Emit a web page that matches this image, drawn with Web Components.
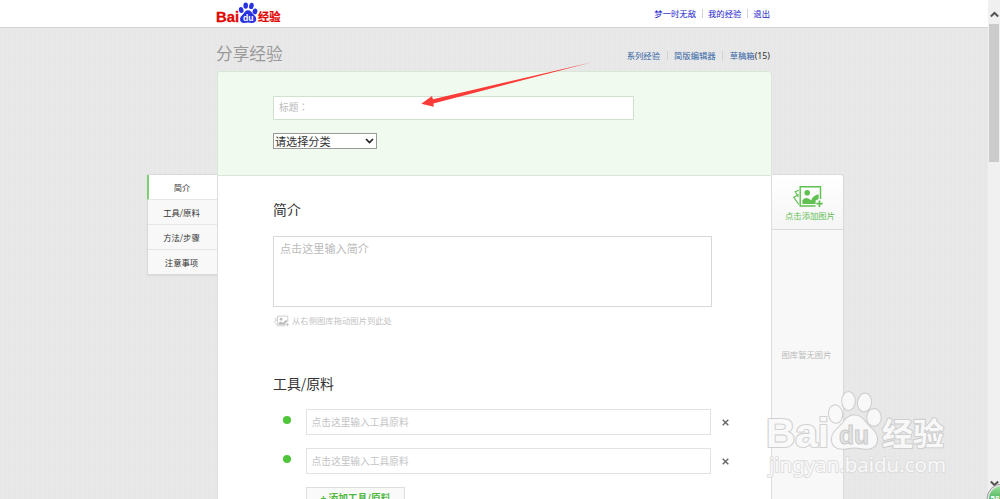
<!DOCTYPE html>
<html lang="zh-CN">
<head>
<meta charset="utf-8">
<title>分享经验</title>
<style>
  html, body {
    margin: 0;
    height: 100%;
    overflow: hidden;
  }
  body {
    font-family: "Noto Sans CJK SC", sans-serif;
    font-size: 8.33px;
    line-height: 12px;
    color: #333;
    background: #e8e8e8;
  }
</style>
</head>
<body>
<exp-app></exp-app>

<script>
const define = (name, html) => {
  const template = document.createElement('template');
  template.innerHTML = html;

  window.customElements.define(name, class extends HTMLElement {
    constructor() {
      super();
      this.attachShadow({ mode: 'open' }).appendChild(template.content.cloneNode(true));
    }
  });
};

define('exp-logo', `
  <style>
    :host { display: block; width: 66px; height: 24px; }
    svg { display: block; overflow: visible; }
    text { font-weight: bold; }
  </style>
  <svg width="66" height="24" viewBox="0 0 66 24">
    <g fill="#e10601">
      <text x="-1" y="20.800" font-family="Liberation Sans, Arial, sans-serif" font-size="14" textLength="23" lengthAdjust="spacingAndGlyphs" stroke="#e10601" stroke-width=".3">Bai</text>
      <text x="41" y="20.300" font-family="Noto Sans CJK SC, sans-serif" font-size="11.200" textLength="22.500" lengthAdjust="spacingAndGlyphs" stroke="#e10601" stroke-width=".2">经验</text>
    </g>
    <g fill="#2932e1">
      <ellipse cx="24.200" cy="9" rx="2.300" ry="3.100" transform="rotate(-12 24.200 9)"/>
      <ellipse cx="28.700" cy="4.600" rx="2.300" ry="3.200"/>
      <ellipse cx="34.400" cy="4.900" rx="2.300" ry="3.200" transform="rotate(12 34.400 4.900)"/>
      <ellipse cx="38" cy="10.400" rx="2.400" ry="3" transform="rotate(10 38 10.400)"/>
      <path d="M31 9.300c2.600 0 3.600 2.200 5 3.600 1.600 1.500 3.200 2.900 3.200 5.200 0 2.500-1.600 4-4.400 3.900-1.500-.1-2.600-.4-3.800-.4s-2.300.4-3.800.4c-2.800 0-4.200-1.400-4.200-3.900 0-2.300 1.700-3.600 3.200-5.200 1.400-1.500 2.200-3.600 4.800-3.600z"/>
    </g>
    <text x="26" y="20" fill="#fff" font-family="Liberation Sans, Arial, sans-serif" font-size="9" textLength="10.500" lengthAdjust="spacingAndGlyphs">du</text>
  </svg>
`);

define('exp-links', `
  <style>
    :host { display: flex; align-items: center; --gap: 5.5px; }
    ::slotted(*) { padding-left: var(--gap); margin-left: var(--gap); border-left: 1px solid #d2d2d2; line-height: 9px; white-space: nowrap; }
    ::slotted(:first-child) { border: 0; }
  </style>
  <slot></slot>
`);

define('exp-header', `
  <style>
    :host {
      display: flex;
      box-sizing: border-box;
      height: 28px;
      padding-left: 217px;
      background: #fff;
      border-bottom: 1px solid #d2d2d2;
    }
    .inner { display: flex; justify-content: space-between; width: 553px; }
    exp-links { color: #2020cc; height: 27px; }
    exp-logo { margin-top: 1px; }
  </style>
  <div class="inner">
    <exp-logo></exp-logo>
    <exp-links><span>梦一时无敌</span><span>我的经验</span><span>退出</span></exp-links>
  </div>
`);

define('exp-nav', `
  <style>
    :host {
      display: block;
      box-sizing: border-box;
      width: 70px;
      height: 101px;
      margin-top: 146px;
      background: #f8f8f8;
      border: 1px solid #d8d8d8;
      border-right: 0;
      box-shadow: 0 1px 1px rgba(0, 0, 0, .04);
    }
    div {
      box-sizing: border-box;
      height: 25px;
      padding-right: 2px;
      line-height: 24px;
      text-align: center;
      border-bottom: 1px solid #e6e6e6;
    }
    div:last-child { border: 0; }
    .on { margin-left: -1px; background: #fff; border-left: 2px solid #7bd070; }
  </style>
  <div class="on">简介</div>
  <div>工具/原料</div>
  <div>方法/步骤</div>
  <div>注意事项</div>
`);

define('exp-icon-photo', `
  <style>
    :host { display: block; width: 30px; height: 23px; color: #5fc052; }
    svg { display: block; width: 100%; height: 100%; }
  </style>
  <svg viewBox="0 0 30 23" fill="none" stroke="currentColor">
    <path d="M27.500 14V1.700H7.200V21H22.500" stroke-width="1.400"/>
    <path d="M5.800 5.200L2.300 6.800l3 5.200M5.800 9.500L.8 12.300l5 7.200" stroke-width="1.200"/>
    <circle cx="14.200" cy="7.800" r="2.800" fill="currentColor" stroke="none"/>
    <path d="M9.400 19v-3.400c.8-2 3.800-3.500 6-2.100l2.800 1.700c1.300-3 4-5.400 7.400-5.900v4.700l-3 1.500v3.500z" fill="currentColor" stroke="none"/>
    <path d="M26.500 15.500v6.500M23.300 18.700h6.400" stroke-width="1.700"/>
  </svg>
`);

define('exp-gallery', `
  <style>
    :host {
      display: flex;
      flex-direction: column;
      box-sizing: border-box;
      width: 72px;
      height: 340px;
      margin-top: 146px;
      background: #f8f8f8;
      border: 1px solid #dadada;
      border-left: 0;
      border-radius: 0 4px 0 0;
    }
    .add {
      display: flex;
      flex-direction: column;
      align-items: center;
      box-sizing: border-box;
      height: 55px;
      padding-top: 10px;
      color: #5fc052;
      background: linear-gradient(#fff, #f5f5f5);
      border-bottom: 1px solid #dadada;
      border-radius: 0 4px 0 0;
    }
    .add span { margin-top: 1px; padding-left: 5px; white-space: nowrap; }
    .empty { margin-top: 118px; padding-right: 2px; text-align: center; color: #bbb; }
  </style>
  <div class="add"><exp-icon-photo></exp-icon-photo><span>点击添加图片</span></div>
  <div class="empty">图库暂无图片</div>
`);

define('exp-title', `
  <style>
    :host {
      display: flex;
      flex-direction: column;
      align-items: flex-start;
      box-sizing: border-box;
      height: 105px;
      padding: 24px 0 0 55px;
      margin: 0 -1px;
      background: #f0faef;
      border: 1px solid #d8e8d8;
      border-radius: 3px 3px 0 0;
    }
    .input {
      box-sizing: border-box;
      width: 361px;
      height: 24px;
      padding-left: 5px;
      line-height: 21px;
      font-family: "Noto Sans CJK TC", sans-serif;
      font-size: 9.72px;
      color: #bbb;
      background: #fff;
      border: 1px solid #cfe2cf;
    }
    .select {
      display: flex;
      align-items: center;
      justify-content: space-between;
      box-sizing: border-box;
      width: 104px;
      height: 16px;
      margin-top: 13px;
      padding: 0 2px 0 1px;
      font-size: 11.11px;
      line-height: 14px;
      background: #fff;
      border: 1px solid #999;
    }
    .select span { margin-top: -1px; }
  </style>
  <div class="input" lang="zh-TW">标题：</div>
  <div class="select">
    <span>请选择分类</span>
    <svg width="9" height="6" viewBox="0 0 9 6"><path d="M1 1l3.500 3.500L8 1" fill="none" stroke="#222" stroke-width="1.700"/></svg>
  </div>
`);

define('exp-section', `
  <style>
    :host { display: block; }
    h2 { margin: 0; font-size: 13.89px; line-height: 20px; font-weight: normal; }
  </style>
  <h2><slot name="heading"></slot></h2>
  <slot></slot>
`);

define('exp-item', `
  <style>
    :host { display: flex; align-items: center; height: 26px; margin-bottom: 13px; }
    i { width: 8px; height: 8px; margin: 0 15px 4px 10px; border-radius: 50%; background: #4fc63a; }
    div {
      box-sizing: border-box;
      width: 405px;
      height: 26px;
      padding-left: 4.500px;
      font-size: 9.72px;
      line-height: 24px;
      color: #c4c4c4;
      border: 1px solid #e2e2e2;
    }
    svg { margin: 1px 0 0 11px; }
  </style>
  <i></i>
  <div><slot></slot></div>
  <svg width="7" height="7" viewBox="0 0 7 7"><path d="M.7.7l5.600 5.600M6.300.7L.7 6.300" stroke="#666" stroke-width="1.400"/></svg>
`);

define('exp-editor', `
  <style>
    :host {
      display: block;
      box-sizing: border-box;
      width: 555px;
      height: 440px;
      background: #fff;
      border: solid #dedede;
      border-width: 0 1px;
    }
    .body { padding: 23px 0 0 55px; }
    .textarea {
      box-sizing: border-box;
      width: 439px;
      height: 71px;
      margin-top: 17px;
      padding: 3px 6px;
      font-size: 11.11px;
      line-height: 16px;
      color: #bbb;
      border: 1px solid #d8d8d8;
    }
    .hint { display: flex; align-items: center; gap: 3px; margin: 8px 0 46px 1px; color: #c4c4c4; }
    .hint exp-icon-photo { width: 15px; height: 12px; color: #bdbdbd; }
    .hint span { margin-top: -2px; }
    .items { padding-top: 16px; }
    .more {
      box-sizing: border-box;
      width: 99px;
      height: 24px;
      margin-left: 33px;
      font-size: 9.72px;
      line-height: 20px;
      font-weight: bold;
      text-align: center;
      color: #4fb83f;
      background: #fafafa;
      border: 1px solid #dedede;
    }
  </style>
  <exp-title></exp-title>
  <div class="body">
    <exp-section>
      <span slot="heading">简介</span>
      <div class="textarea">点击这里输入简介</div>
      <div class="hint"><exp-icon-photo></exp-icon-photo><span>从右侧图库拖动图片到此处</span></div>
    </exp-section>
    <exp-section>
      <span slot="heading">工具/原料</span>
      <div class="items">
        <exp-item>点击这里输入工具原料</exp-item>
        <exp-item>点击这里输入工具原料</exp-item>
        <div class="more">+ 添加工具/原料</div>
      </div>
    </exp-section>
  </div>
`);

define('exp-scrollbar', `
  <style>
    :host {
      display: flex;
      flex-direction: column;
      align-items: center;
      width: 12px;
      height: 499px;
      background: #f0f0f0;
    }
    svg { margin: 11px 0 6px; }
    div { width: 10px; height: 138px; background: #cbcbcb; }
    .down { margin: auto 0 12px; }
  </style>
  <svg width="9" height="7" viewBox="0 0 9 7"><path d="M.8 5.500L4.500 2l3.700 3.500" fill="none" stroke="#555" stroke-width="2"/></svg>
  <div></div>
  <svg class="down" width="9" height="7" viewBox="0 0 9 7"><path d="M.8 1.500L4.500 5l3.700-3.500" fill="none" stroke="#555" stroke-width="2"/></svg>
`);

// Pointer arrow, watermark and the corner badge float over the page.
define('exp-overlay', `
  <style>
    :host { position: absolute; left: 0; top: 0; width: 1000px; height: 499px; overflow: hidden; pointer-events: none; }
    svg { display: block; }
    .mark { fill: #fafafa; stroke: #cdcdcd; stroke-width: 2.200px; paint-order: stroke; stroke-linejoin: round; opacity: .9; }
    .mark .url { stroke: #dcdcdc; stroke-width: 2px; }
  </style>
  <svg width="1000" height="499" viewBox="0 0 1000 499">
    <defs>
      <linearGradient id="ball" x2="0" y2="1"><stop stop-color="#9be09b"/><stop offset=".6" stop-color="#3fae50"/></linearGradient>
    </defs>
    <path d="M421.300 103.800L432 96l.9 3.200L592 62.300 433.400 103.500l.4 3.300z" fill="#fb3b37"/>
    <g class="mark">
      <text x="766" y="447" font-family="Liberation Sans, Arial, sans-serif" font-weight="bold" font-size="40" textLength="63" lengthAdjust="spacingAndGlyphs">Bai</text>
      <ellipse cx="835.500" cy="414" rx="6.500" ry="8.700" transform="rotate(-8 835.500 414)"/>
      <ellipse cx="848.500" cy="401" rx="6.300" ry="8.900"/>
      <ellipse cx="864.500" cy="402.500" rx="6.500" ry="8.900" transform="rotate(8 864.500 402.500)"/>
      <ellipse cx="874" cy="417.500" rx="6.800" ry="8.300"/>
      <path d="M854.500 415.500c7.500 0 10 6 13.500 9.800 4 4.300 9 7.200 9 14 0 6.200-4 9.700-11 9.400-4.500-.2-7.500-1.200-11.500-1.200s-7 1-11.500 1.200c-7 .2-11-3.200-11-9.400 0-6.800 5-9.500 9-14 3.600-4 6-9.800 13.500-9.800z"/>
      <text x="882" y="444.500" font-family="Noto Sans CJK SC, sans-serif" font-weight="bold" font-size="31" textLength="62" lengthAdjust="spacingAndGlyphs">经验</text>
      <text class="url" x="769" y="472" font-family="Noto Sans, sans-serif" font-size="20.500" textLength="177" lengthAdjust="spacingAndGlyphs">jingyan.baidu.com</text>
    </g>
    <text x="839" y="444" fill="#e2e2e2" stroke="#cacaca" stroke-width="1" font-family="Liberation Sans, Arial, sans-serif" font-weight="bold" font-size="25" textLength="30" lengthAdjust="spacingAndGlyphs">du</text>
    <circle cx="1002" cy="499" r="15" fill="#e3e3e3" stroke="#888" stroke-width=".8"/>
    <circle cx="1002" cy="499" r="13" fill="url(#ball)"/>
    <text x="990.500" y="501" fill="#fff" font-family="Liberation Sans, Arial, sans-serif" font-weight="bold" font-size="8">58</text>
  </svg>
`);

define('exp-app', `
  <style>
    :host { display: flex; height: 499px; overflow: hidden; }
    .page { width: 988px; height: 499px; overflow: hidden; background: #e7e7e7 radial-gradient(circle, rgba(255, 255, 255, .1) 1px, transparent 1.500px) 0 0 / 5px 3px; }
    .cols { display: flex; align-items: flex-start; padding-left: 147px; }
    .top { display: flex; justify-content: space-between; align-items: center; height: 43px; padding: 0 2px 0 0; }
    h1 { margin: 6px 0 0 -1px; font-size: 16.67px; line-height: 24px; font-weight: normal; color: #999; }
    exp-links { --gap: 6.500px; margin-top: 12px; color: #3163a5; }
    b { font-weight: normal; font-size: 8.800px; color: #333; font-family: "Noto Sans", sans-serif; }
  </style>
  <div class="page">
    <exp-header></exp-header>
    <div class="cols">
      <exp-nav></exp-nav>
      <div class="main">
        <div class="top">
          <h1>分享经验</h1>
          <exp-links><span>系列经验</span><span>简版编辑器</span><span>草稿箱<b>(15)</b></span></exp-links>
        </div>
        <exp-editor></exp-editor>
      </div>
      <exp-gallery></exp-gallery>
    </div>
  </div>
  <exp-scrollbar></exp-scrollbar>
  <exp-overlay></exp-overlay>
`);
</script>
</body>
</html>
